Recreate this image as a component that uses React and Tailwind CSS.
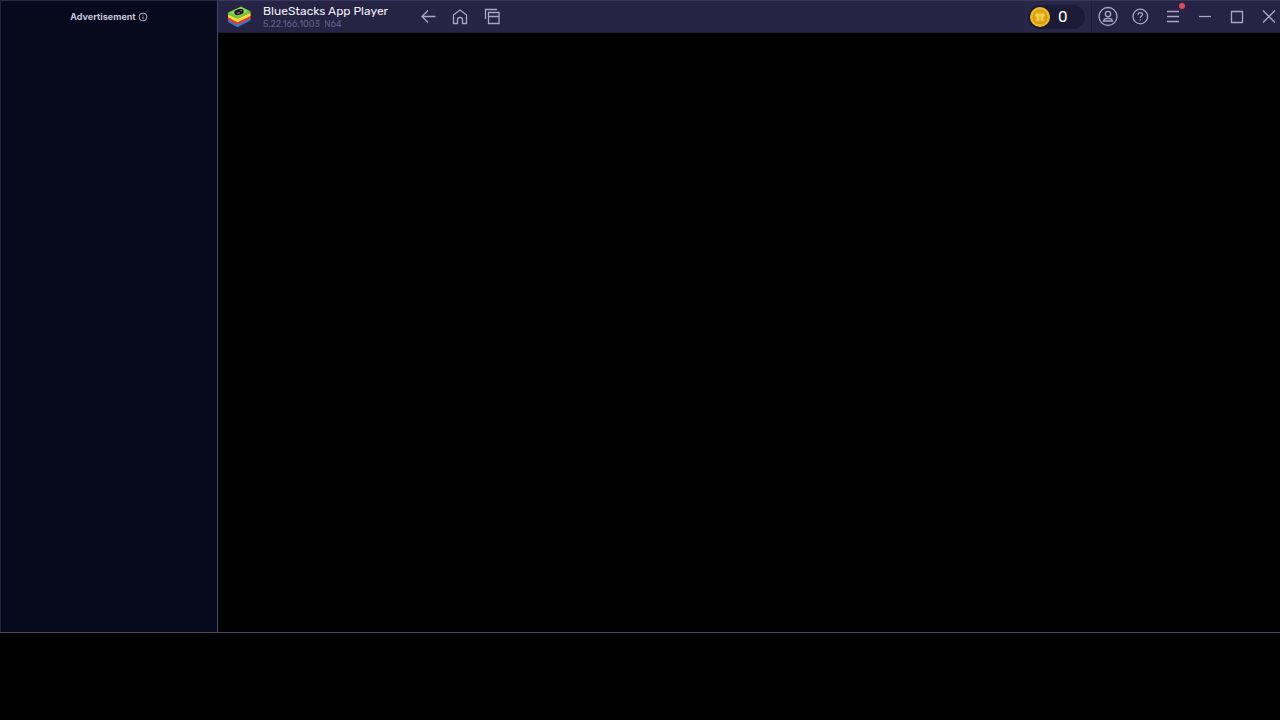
import React from "react";

function IconButton({ label, children }) {
  return (
    <button type="button" aria-label={label} className="relative flex h-6 w-6 items-center justify-center text-[#a9a5cb]">
      <svg viewBox="0 0 24 24" className="h-6 w-6" fill="none" stroke="currentColor" strokeWidth="1.3" aria-hidden="true">
        {children}
      </svg>
    </button>
  );
}

function Logo() {
  return (
    <svg viewBox="0 0 24 22" className="h-[22px] w-6" aria-hidden="true">
      <path d="M1 12.5L10.500 17.500L23.500 11.500V14.500L10.500 21.300L1 16Z" fill="#2c7fc9" />
      <path d="M1 10L10.500 15L23.500 9V12.500L10.500 18.800L1 13.800Z" fill="#e8353b" />
      <path d="M1 8L10.500 12.500L23.500 6.500V10L10.500 16.200L1 11.200Z" fill="#fbdc2c" />
      <path d="M1 6.500L14 0.500L23.500 5.200V6.800L10.500 13L1 8.200Z" fill="#6cc544" />
      <path d="M3.200 6.400L14 1.500L21.300 5.200L10.700 10.600Z" fill="#93d65a" />
      <ellipse cx="12" cy="6" rx="4.800" ry="2.900" fill="#171327" transform="rotate(-14 12 6)" />
      <ellipse cx="11.300" cy="6.900" rx="1.900" ry="1" fill="#8a4576" />
      <circle cx="14" cy="4.800" r="0.600" fill="#a9b7b6" />
    </svg>
  );
}

function Coin() {
  return (
    <svg viewBox="0 0 20 20" className="h-5 w-5" aria-hidden="true">
      <circle cx="10" cy="10" r="10" fill="#efbd2b" />
      <circle cx="10" cy="10" r="7.600" fill="#cf930f" />
      <circle cx="10" cy="10" r="6.700" fill="#dca51b" />
      <path d="M5 8.300Q5.500 5.500 8 6.200L10 7L12 6.200Q14.500 5.500 15 8.300L13.500 9.300V14H11.200V9.500H8.800V14H6.500V9.300Z" fill="#f6d044" />
      <path d="M10 8V13.500" stroke="#f6d044" strokeWidth="1" />
    </svg>
  );
}

export default function App() {
  return (
    <div className="flex min-h-screen flex-col bg-black font-['Rubik','Roboto',sans-serif]">
      <div className="flex flex-1 border-b border-[#48466f]">
        <aside className="w-[218px] shrink-0 border-t border-r border-l border-t-[#2a2945] border-r-[#48466f] border-l-[#23223d] bg-[#07091c]">
          <div className="flex h-8 items-center justify-center gap-0.5 text-[#c5c4d8]">
            <span className="font-['Inter',sans-serif] text-[9px] leading-4 font-bold">Advertisement</span>
            <button type="button" aria-label="About this advertisement">
              <svg viewBox="0 0 10 10" className="h-2.5 w-2.5" fill="none" stroke="currentColor" strokeWidth="0.9" aria-hidden="true">
                <circle cx="5" cy="5" r="3.900" />
                <path d="M5 4.500V7.200M5 2.600V3.500" />
              </svg>
            </button>
          </div>
        </aside>

        <main className="flex min-w-0 flex-1 flex-col">
          <header className="flex h-[33px] items-center border-t border-b border-t-[#39375c] border-b-[#1c1b32] bg-[#262344]">
            <div className="flex items-center gap-3 pl-[9px]">
              <Logo />
              <div className="w-[153px]">
                <h1 className="text-[12px] leading-[14px] whitespace-nowrap text-[#f0effa]">BlueStacks App Player</h1>
                <p className="text-[9px] leading-3 whitespace-pre text-[#625f88]">5.22.166.1003  N64</p>
              </div>
            </div>

            <nav aria-label="Navigation" className="flex items-center gap-2">
              <IconButton label="Back">
                <path d="M19.500 11.500H6M12 5.500L6 11.500L12 17.500" />
              </IconButton>
              <IconButton label="Home">
                <path d="M5.500 10L12 5L18.500 10V18.500H14.500V14.500Q14.500 12.500 12 12.500Q9.500 12.500 9.500 14.500V18.500H5.500Z" />
              </IconButton>
              <IconButton label="Recent apps">
                <path d="M5.500 14V4.500H17M8.500 7.500H19V18.500H8.500ZM8.500 11.500H19" />
              </IconButton>
            </nav>

            <div className="ml-auto flex h-full items-center">
              <div className="flex h-full items-center border-r border-[#1e1c38] bg-[#292748] pr-1.5 pl-1">
                <div className="flex h-6 w-[57px] items-center gap-2 rounded-full bg-[#1c1a35] pl-0.5">
                  <Coin />
                  <span className="text-[15px] leading-5 text-white">0</span>
                </div>
              </div>
              <div className="flex items-center gap-2 pl-1">
                <IconButton label="Account">
                  <circle cx="12" cy="11.500" r="9" />
                  <circle cx="12" cy="9" r="2.700" />
                  <path d="M7.500 16Q8 13.300 12 13.300Q16 13.300 16.500 16Z" />
                </IconButton>
                <IconButton label="Help">
                  <circle cx="12.300" cy="11.500" r="7.300" />
                  <path d="M10.100 9.800C10.100 6.900 14.500 6.900 14.500 9.500C14.500 11.200 12.300 11 12.300 13M12.300 14.300V15.500" />
                </IconButton>
                <div className="relative flex">
                  <IconButton label="Menu">
                    <path d="M7 6.500H19M7 11.500H19M7 16.500H19" />
                  </IconButton>
                  <span className="absolute -top-0.5 -right-px h-1.5 w-1.5 rounded-full bg-[#e04d56]" />
                </div>
                <IconButton label="Minimize">
                  <path d="M7 11.500H19" />
                </IconButton>
                <IconButton label="Maximize">
                  <path d="M7.500 6.500H18.500V17.500H7.500Z" />
                </IconButton>
                <IconButton label="Close">
                  <path d="M7 5.500L19 17.500M19 5.500L7 17.500" />
                </IconButton>
              </div>
            </div>
          </header>
          <div className="flex-1 bg-black" />
        </main>
      </div>
      <div className="h-[87px] bg-black" />
    </div>
  );
}
